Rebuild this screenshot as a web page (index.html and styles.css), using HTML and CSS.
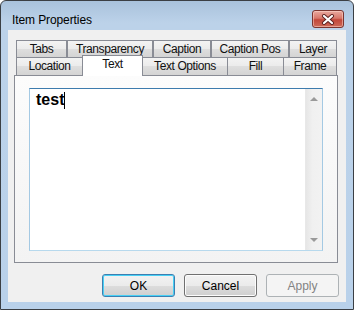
FILE: index.html
```html
<!DOCTYPE html>
<html lang="en">
<head>
    <meta charset="UTF-8">
    <title>Item Properties</title>
    <link rel="stylesheet" href="styles.css">
</head>
<body>
    <div class="window">
        <div class="titlebar">
            <span class="title">Item Properties</span>
            <button class="close-btn">
                <svg width="14" height="11" viewBox="0 0 14 11">
                    <path d="M3 2 L11 9 M11 2 L3 9" stroke="#5a2020" stroke-width="4" stroke-linecap="round"/>
                    <path d="M3 2 L11 9 M11 2 L3 9" stroke="#fff" stroke-width="2.2" stroke-linecap="round"/>
                </svg>
            </button>
        </div>
        <div class="client">
            <div class="tab-row back">
                <div class="tab w-tabs">Tabs</div>
                <div class="tab w-transp">Transparency</div>
                <div class="tab w-caption">Caption</div>
                <div class="tab w-cappos">Caption Pos</div>
                <div class="tab w-layer">Layer</div>
            </div>
            <div class="tab-row front">
                <div class="tab w-loc">Location</div>
                <div class="tab w-text selected">Text</div>
                <div class="tab w-textopt">Text Options</div>
                <div class="tab w-fill">Fill</div>
                <div class="tab w-frame">Frame</div>
            </div>
            <div class="panel">
                <div class="textbox">
                    <div class="text-content">test<span class="caret"></span></div>
                    <div class="scrollbar">
                        <span class="arrow up"></span>
                        <span class="arrow down"></span>
                    </div>
                </div>
            </div>
            <div class="buttons">
                <button class="btn default">OK</button>
                <button class="btn">Cancel</button>
                <button class="btn" disabled>Apply</button>
            </div>
        </div>
    </div>
</body>
</html>
```

FILE: styles.css
```css
* {
    margin: 0;
    padding: 0;
    box-sizing: border-box;
}
body {
    font-family: "Liberation Sans", Arial, sans-serif;
    background-color: #fff;
}
.window {
    width: 354px;
    height: 310px;
    border: 1px solid #3b3f44;
    border-radius: 6px 6px 0 0;
    background: linear-gradient(#a9c2dc, #bcd2e9 22px, #b9d1ea);
    padding: 0 7px 7px 7px;
    display: flex;
    flex-direction: column;
}
.titlebar {
    height: 29px;
    display: flex;
    align-items: flex-start;
    justify-content: space-between;
}
.title {
    font-size: 12px;
    color: #000;
    padding: 12px 0 0 4px;
    letter-spacing: -0.1px;
}
.close-btn {
    width: 32px;
    height: 18px;
    margin: 9px 2px 0 0;
    border: 1px solid #7b3530;
    border-radius: 3px;
    background: linear-gradient(#e9a99f, #d8776b 45%, #c2473a 55%, #cd6a58);
    box-shadow: inset 0 0 0 1px rgba(255, 220, 210, 0.5);
    display: flex;
    align-items: center;
    justify-content: center;
}
.client {
    flex: 1;
    background-color: #f0f0f0;
    padding: 10px 9px 0 6px;
    display: flex;
    flex-direction: column;
}
.tab-row {
    display: flex;
    padding-left: 2px;
}
.tab-row.back {
    height: 17px;
}
.tab-row.front {
    height: 18px;
    align-items: flex-end;
}
.tab {
    height: 100%;
    border: 1px solid #898c95;
    border-bottom: none;
    background: linear-gradient(#f3f3f3, #ebebeb 50%, #dedede 50%, #d4d4d4);
    font-size: 12px;
    letter-spacing: -0.4px;
    color: #111;
    text-align: center;
    line-height: 16px;
}
.tab-row.front .tab {
    margin-left: -1px;
}
.tab-row.front .tab:first-child {
    margin-left: 0;
}
.tab.selected {
    height: 21px;
    margin-bottom: -1px;
    background: #fff;
    position: relative;
    z-index: 1;
    line-height: 17px;
}
.w-tabs { width: 51px; }
.w-transp { width: 86px; }
.w-caption { width: 58px; }
.w-cappos { width: 78px; }
.w-layer { width: 48px; }
.w-loc { width: 67px; }
.w-text { width: 61px; }
.w-textopt { width: 86px; }
.w-fill { width: 57px; }
.w-frame { width: 54px; }
.panel {
    width: 324px;
    height: 188px;
    border: 1px solid #898c95;
    background: linear-gradient(#fcfcfc, #f3f3f3);
    padding: 12px 14px 10px 14px;
}
.textbox {
    height: 163px;
    border: 1px solid;
    border-color: #3d7bad #a4c9e3 #b7d9ed #a4c9e3;
    background-color: #fff;
    display: flex;
}
.text-content {
    flex: 1;
    font-size: 16px;
    font-weight: bold;
    padding: 1px 0 0 6px;
    line-height: 19px;
    color: #000;
}
.caret {
    display: inline-block;
    width: 1px;
    height: 17px;
    background-color: #000;
    vertical-align: -4px;
}
.scrollbar {
    width: 17px;
    background: linear-gradient(90deg, #e6e6e6, #f0f0f0 40%, #f2f2f2);
    border-left: 1px solid #e8e8e8;
    position: relative;
}
.arrow {
    position: absolute;
    left: 4px;
    width: 0;
    height: 0;
    border-left: 4px solid transparent;
    border-right: 4px solid transparent;
}
.arrow.up {
    top: 8px;
    border-bottom: 4px solid #9a9a9a;
}
.arrow.down {
    bottom: 8px;
    border-top: 4px solid #9a9a9a;
}
.buttons {
    display: flex;
    justify-content: flex-end;
    gap: 9px;
    margin: 11px -2px 0 0;
}
.btn {
    width: 73px;
    height: 23px;
    border: 1px solid #707070;
    border-radius: 3px;
    background: linear-gradient(#f2f2f2, #ebebeb 50%, #dddddd 50%, #cfcfcf);
    box-shadow: inset 0 0 0 1px #fcfcfc;
    font-family: "Liberation Sans", Arial, sans-serif;
    font-size: 12px;
    color: #000;
}
.btn.default {
    border-color: #3c7fb1;
    box-shadow: inset 0 0 0 1px #48d0f5;
}
.btn:disabled {
    border-color: #adb2b5;
    background: #f4f4f4;
    box-shadow: none;
    color: #838383;
}
```
